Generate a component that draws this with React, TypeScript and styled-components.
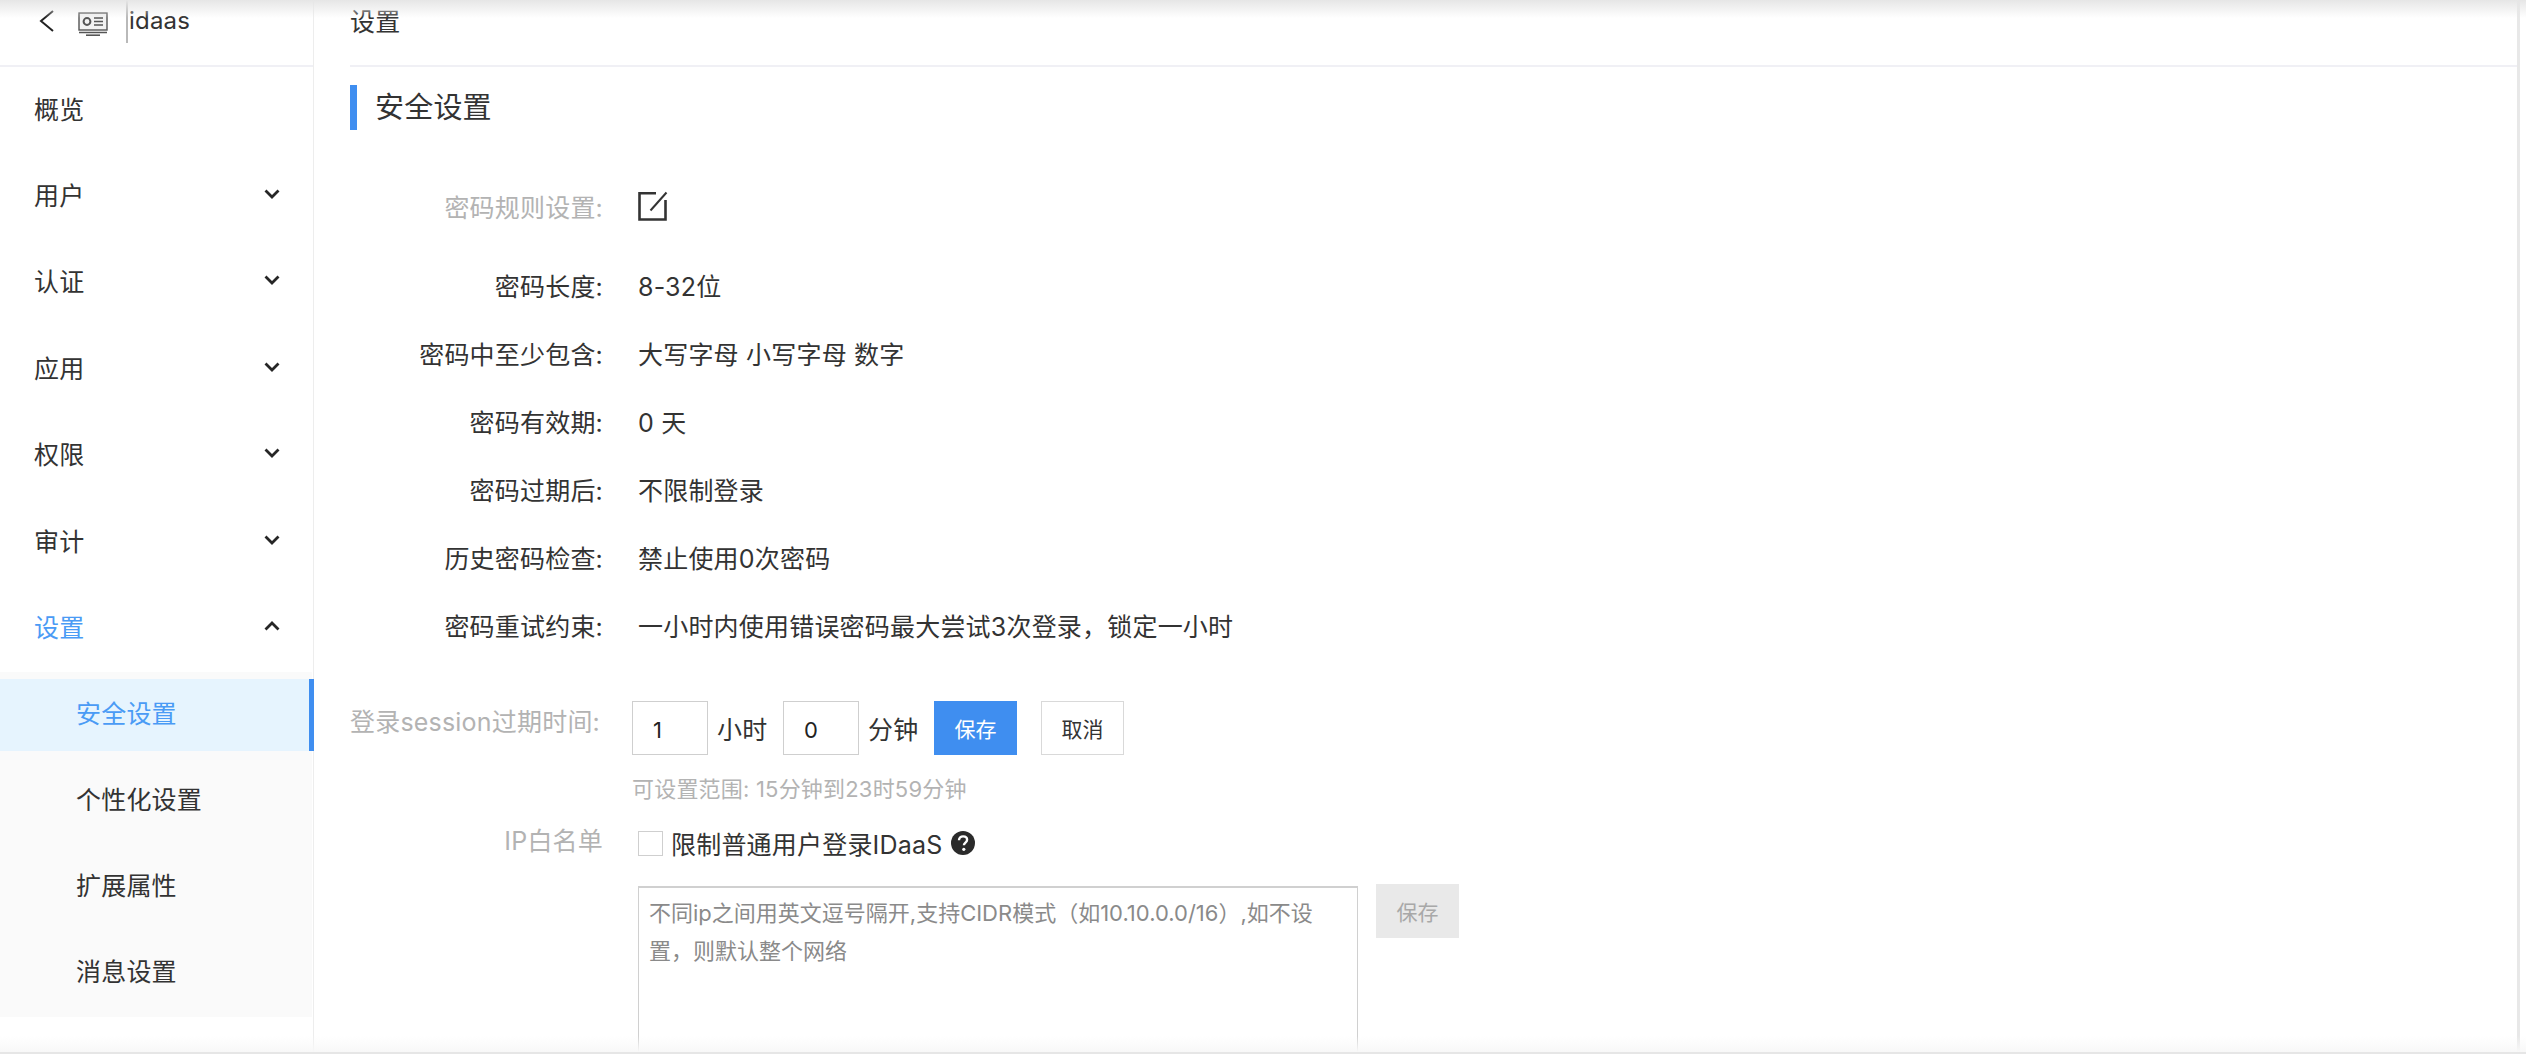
import React from 'react';
import styled, { createGlobalStyle } from 'styled-components';

const GlobalStyle = createGlobalStyle`
  html, body {
    margin: 0;
    padding: 0;
    height: 100%;
    overflow: hidden;
    background: #fff;
  }
  * { box-sizing: border-box; }
  body {
    font-family: Inter, "Noto Sans CJK SC", sans-serif;
    color: #333;
  }
`;

const menu = [
  { name: '概览' },
  { name: '用户', arrow: 'down' },
  { name: '认证', arrow: 'down' },
  { name: '应用', arrow: 'down' },
  { name: '权限', arrow: 'down' },
  { name: '审计', arrow: 'down' },
  { name: '设置', arrow: 'up', open: true },
];

const subMenu = ['安全设置', '个性化设置', '扩展属性', '消息设置'];

const rules = [
  ['密码长度:', '8-32位'],
  ['密码中至少包含:', '大写字母 小写字母 数字'],
  ['密码有效期:', '0 天'],
  ['密码过期后:', '不限制登录'],
  ['历史密码检查:', '禁止使用0次密码'],
  ['密码重试约束:', '一小时内使用错误密码最大尝试3次登录，锁定一小时'],
];

function Chevron({ up }: { up?: boolean }) {
  return (
    <svg width="16" height="10" viewBox="0 0 16 10" fill="none" stroke="#262626" strokeWidth="2.8">
      <path d={up ? 'M1.5 8.5 8 2l6.5 6.5' : 'M1.5 1.5 8 8l6.5-6.5'} />
    </svg>
  );
}

export default function App() {
  return (
    <>
      <GlobalStyle />
      <Page>
        <TopShadow />
        <BottomFade />
        <Sidebar>
          <SideHeader>
            <svg width="16" height="22" viewBox="0 0 16 22" fill="none" stroke="#222" strokeWidth="2">
              <path d="M14 1 2 11l12 10" />
            </svg>
            <AppIcon width="30" height="24" viewBox="0 0 30 24" fill="none" stroke="#555" strokeWidth="1.4">
              <rect x="1" y="1" width="28" height="17" fill="#f2f2f2" />
              <circle cx="9" cy="9.5" r="3.4" strokeWidth="2" />
              <path d="M16 6h9M16 9.5h9M16 13h9M1 20.5h28" />
              <path d="M8 23.2h14" strokeWidth="1.6" />
            </AppIcon>
            <AppName>idaas</AppName>
          </SideHeader>
          {menu.map((item) => (
            <MenuItem key={item.name} $open={item.open}>
              {item.name}
              {item.arrow && <Chevron up={item.arrow === 'up'} />}
            </MenuItem>
          ))}
          <SubMenu>
            {subMenu.map((name, i) => (
              <SubItem key={name} $active={i === 0}>{name}</SubItem>
            ))}
          </SubMenu>
        </Sidebar>
        <Main>
          <Title>设置</Title>
          <Section>安全设置</Section>
          <Row $first>
            <Label $muted>密码规则设置:</Label>
            <svg width="30" height="30" viewBox="0 0 30 30" fill="none" stroke="#333" strokeWidth="2.6">
              <path d="M18 2.2H1.5v26.3h26V9" />
              <path d="M28.5 1.5 12.5 19.5" strokeWidth="2" />
            </svg>
          </Row>
          {rules.map(([label, value]) => (
            <Row key={label}>
              <Label>{label}</Label>
              <span>{value}</span>
            </Row>
          ))}
          <SessionRow>
            <SessionLabel>登录session过期时间:</SessionLabel>
            <NumberInput defaultValue="1" />
            <Unit>小时</Unit>
            <NumberInput defaultValue="0" />
            <Unit>分钟</Unit>
            <PrimaryButton>保存</PrimaryButton>
            <PlainButton>取消</PlainButton>
          </SessionRow>
          <Hint>可设置范围: 15分钟到23时59分钟</Hint>
          <IpRow>
            <Label $muted>IP白名单</Label>
            <CheckBox />
            <span>限制普通用户登录IDaaS</span>
            <svg width="24" height="24" viewBox="0 0 24 24">
              <circle cx="12" cy="12" r="12" fill="#2b2b2b" />
              <path d="M8 9.2c0-2.4 1.8-3.8 4.1-3.8 2.3 0 4 1.3 4 3.4 0 2.8-3.2 2.8-3.2 5.4" fill="none" stroke="#fff" strokeWidth="2.4" />
              <circle cx="12.8" cy="18.3" r="1.6" fill="#fff" />
            </svg>
          </IpRow>
          <WhiteList>
            <IpBox>不同ip之间用英文逗号隔开,支持CIDR模式（如10.10.0.0/16）,如不设置，则默认整个网络</IpBox>
            <DisabledButton>保存</DisabledButton>
          </WhiteList>
        </Main>
      </Page>
    </>
  );
}

const Page = styled.div`
  position: relative;
  display: flex;
  width: 2526px;
  height: 1054px;
  overflow: hidden;
  border-bottom: 2px solid #e6e6e6;
  font-size: 25px;
  letter-spacing: 0.2px;
`;

const TopShadow = styled.div`
  position: absolute;
  top: 0;
  left: 0;
  right: 0;
  height: 18px;
  background: linear-gradient(#e6e6e6, rgba(255, 255, 255, 0));
  pointer-events: none;
`;

const BottomFade = styled.div`
  position: absolute;
  bottom: 0;
  left: 0;
  right: 0;
  height: 16px;
  background: linear-gradient(rgba(250, 250, 250, 0), #f8f8f8);
  pointer-events: none;
`;

const Sidebar = styled.aside`
  flex: none;
  width: 314px;
  border-right: 1px solid #ededed;
`;

const SideHeader = styled.div`
  display: flex;
  align-items: flex-start;
  height: 67px;
  padding: 10px 0 0 39px;
  border-bottom: 2px solid #f0f0f5;
`;

const AppIcon = styled.svg`
  margin: 2px 0 0 23px;
`;

const AppName = styled.span`
  margin: -10px 0 0 18px;
  padding: 3px 0 0 1px;
  border-left: 2px solid #b9b9b9;
  height: 43px;
  line-height: 36px;
  font-size: 24px;
  color: #333;
`;

const MenuItem = styled.div<{ $open?: boolean }>`
  display: flex;
  align-items: center;
  justify-content: space-between;
  height: 86.4px;
  padding: 0 33px 5px 34px;
  color: ${(p) => (p.$open ? '#4a9bf5' : '#333')};
`;

const SubMenu = styled.div`
  width: 312px;
  padding: 7px 0 8px;
  background: #fafafa;
`;

const SubItem = styled.div<{ $active?: boolean }>`
  display: flex;
  align-items: center;
  width: ${(p) => (p.$active ? '314px' : 'auto')};
  height: 72px;
  margin-bottom: 14px;
  padding: 0 0 5px 76px;
  color: ${(p) => (p.$active ? '#4a9bf5' : '#333')};
  background: ${(p) => (p.$active ? '#e6f4fe' : 'transparent')};
  border-right: ${(p) => (p.$active ? '5px solid #3f8ef0' : '0')};

  &:last-child {
    margin-bottom: 0;
  }
`;

const Main = styled.main`
  flex: 1;
  margin-right: 6px;
  padding-left: 36px;
  border-right: 3px solid #e8e8e8;
`;

const Title = styled.div`
  height: 67px;
  padding-top: 3px;
  line-height: 38px;
  border-bottom: 2px solid #f0f0f5;
`;

const Section = styled.h2`
  display: flex;
  align-items: center;
  height: 45px;
  margin: 18px 0 44px;
  padding: 0 0 6px 18px;
  border-left: 7px solid #3f8ef0;
  font-size: 29px;
  font-weight: 400;
`;

const Row = styled.div<{ $first?: boolean }>`
  display: flex;
  align-items: center;
  gap: 38px;
  height: 68px;
  padding-bottom: 5px;
  margin-bottom: ${(p) => (p.$first ? '11px' : '0')};
`;

const Label = styled.span<{ $muted?: boolean }>`
  flex: none;
  width: 253px;
  margin-right: -3px;
  text-align: right;
  color: ${(p) => (p.$muted ? '#b3b3b3' : '#333')};
`;

const SessionRow = styled.div`
  display: flex;
  align-items: center;
  height: 54px;
  margin-top: 40px;
`;

const SessionLabel = styled.span`
  flex: none;
  width: 282px;
  margin-top: -17px;
  color: #b3b3b3;
`;

const NumberInput = styled.input`
  width: 76px;
  height: 54px;
  padding: 4px 0 0 20px;
  border: 1px solid #cfcfcf;
  border-radius: 0;
  outline: none;
  color: #222;
  font: 22px Inter, sans-serif;
`;

const Unit = styled.span`
  width: 75px;
  padding-left: 9px;
`;

const ActionButton = styled.button`
  width: 83px;
  height: 54px;
  padding: 0;
  border-radius: 0;
  font: 21px Inter, "Noto Sans CJK SC", sans-serif;
`;

const PrimaryButton = styled(ActionButton)`
  border: 0;
  color: #fff;
  background: #3f8ef0;
`;

const PlainButton = styled(ActionButton)`
  margin-left: 24px;
  border: 1px solid #d9d9d9;
  color: #333;
  background: #fff;
`;

const Hint = styled.div`
  height: 30px;
  margin: 19px 0 0 282px;
  line-height: 30px;
  color: #b3b3b3;
  font-size: 22px;
`;

const IpRow = styled.div`
  display: flex;
  align-items: center;
  height: 50px;
  margin-top: 14px;

  ${Label} {
    margin: -8px 35px 0 0;
  }

  svg {
    margin-left: 9px;
  }
`;

const CheckBox = styled.span`
  flex: none;
  width: 25px;
  height: 25px;
  margin-right: 8px;
  border: 1px solid #cfcfcf;
`;

const WhiteList = styled.div`
  display: flex;
  align-items: flex-start;
  gap: 18px;
  margin: 18px 0 0 288px;
`;

const IpBox = styled.div`
  width: 720px;
  height: 300px;
  padding: 6px 10px;
  border-style: solid;
  border-color: #d0d0d0;
  border-width: 2px 1px 0;
  color: #8a8a8a;
  font-size: 22px;
  letter-spacing: 0;
  line-height: 38px;
`;

const DisabledButton = styled(ActionButton)`
  margin-top: -2px;
  border: 0;
  color: #a8a8a8;
  background: #e9e9e9;
`;
